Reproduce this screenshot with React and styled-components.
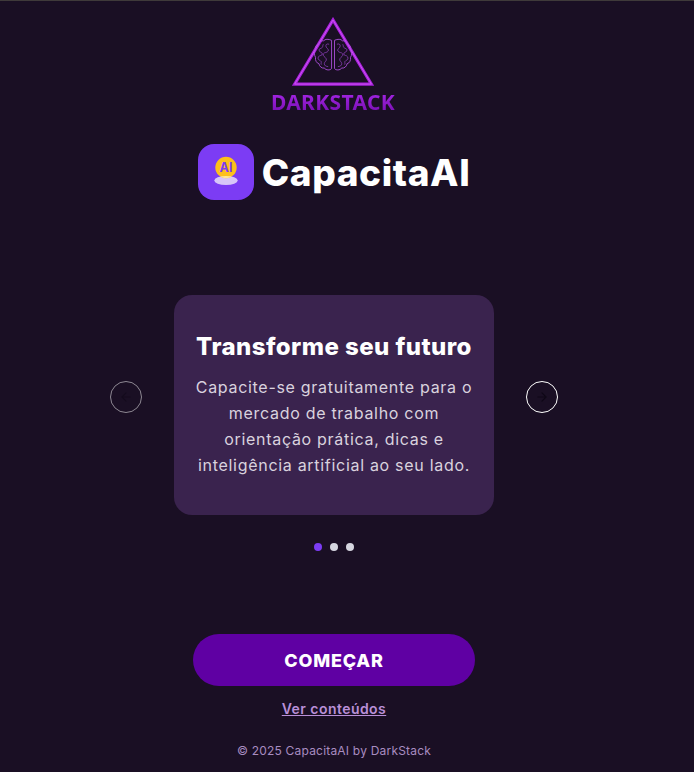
import React from "react";
import styled, { createGlobalStyle } from "styled-components";

const GlobalStyle = createGlobalStyle`
  html, body {
    margin: 0;
    padding: 0;
    background: #1a0f24;
  }
  * {
    box-sizing: border-box;
  }
`;

const Page = styled.div`
  width: 694px;
  height: 772px;
  padding-right: 26px;
  border-top: 1px solid #3f3a3a;
  display: flex;
  flex-direction: column;
  align-items: center;
  font-family: Inter, "Noto Sans", sans-serif;
  color: #fff;
`;

const LogoWrap = styled.div`
  margin-top: 16px;
  height: 95px;
  width: 130px;
  display: flex;
  flex-direction: column;
  align-items: center;
`;

const LogoName = styled.div`
  font-family: "Noto Sans", sans-serif;
  font-weight: 700;
  font-size: 21px;
  line-height: 20px;
  margin-top: 5px;
  margin-right: 2px;
  letter-spacing: 0.35px;
  background: linear-gradient(180deg, #a526e6, #7a10b4);
  -webkit-background-clip: text;
  background-clip: text;
  color: transparent;
`;

const Brand = styled.div`
  margin-top: 32px;
  display: flex;
  align-items: center;
  gap: 8px;
`;

const BrandIcon = styled.div`
  width: 56px;
  height: 56px;
  border-radius: 16px;
  background: #7c3cf4;
  display: flex;
  align-items: center;
  justify-content: center;
`;

const BrandName = styled.h1`
  margin: 0;
  font-size: 37px;
  font-weight: 800;
  letter-spacing: 0.6px;
`;

const Carousel = styled.div`
  margin-top: 95px;
  display: flex;
  align-items: center;
  gap: 32px;
`;

const ArrowButton = styled.button`
  width: 32px;
  height: 32px;
  padding: 0;
  margin-bottom: 16px;
  border-radius: 50%;
  background: transparent;
  border: 1px solid #fff;
  opacity: ${(p) => (p.disabled ? 0.5 : 1)};
  display: flex;
  align-items: center;
  justify-content: center;
  color: #0e0716;
`;

const Card = styled.div`
  width: 320px;
  height: 220px;
  border-radius: 18px;
  background: #3a234e;
  padding: 34px 16px 0;
  text-align: center;
`;

const CardTitle = styled.h2`
  margin: 0 0 9px;
  font-size: 24px;
  line-height: 36px;
  font-weight: 800;
  letter-spacing: 0.45px;
`;

const CardText = styled.p`
  margin: 0;
  font-size: 16px;
  line-height: 26px;
  letter-spacing: 0.7px;
  color: #d9d2de;
`;

const Dots = styled.div`
  margin-top: 28px;
  display: flex;
  gap: 8px;
`;

const Dot = styled.span`
  width: 8px;
  height: 8px;
  border-radius: 50%;
  background: ${(p) => (p.$active ? "#7c3cf4" : "#d6d6e0")};
`;

const StartButton = styled.button`
  margin-top: 83px;
  width: 282px;
  height: 52px;
  border: 0;
  border-radius: 26px;
  background: #5f00a3;
  color: #fff;
  font-family: inherit;
  font-size: 18px;
  font-weight: 800;
  letter-spacing: 0.8px;
`;

const ContentLink = styled.a`
  margin-top: 12px;
  font-size: 14px;
  line-height: 21px;
  font-weight: 600;
  letter-spacing: 0.45px;
  color: #b98fd8;
  text-decoration: underline;
`;

const Footer = styled.footer`
  margin-top: 23px;
  font-size: 12px;
  line-height: 18px;
  letter-spacing: 0.2px;
  color: #a88cc0;
`;

// one half of the brain, x = 0 is the middle of the picture
const lobeOutline =
  "M1.500 -19c3-1.500 7-1.500 8 0.500 3-0.500 5 1 5.500 3.500 2.500 0.500 3.500 3 3 5.500 1.500 2 1.500 6 0 8 0.500 3-1 6-3.500 6.500-0.500 3-3 5-5.500 4.500-2 2.500-6 2.500-7.500 0.500z";

const sulci = [
  "M4 -15c3-1 4 1 3 3s-3 2-2 4 4 1 5 3-2 3-3 5 2 3 2 5-2 3-4 3",
  "M10 -15c1 2 0 3 2 4s3 1 2 3-3 1-3 3 3 1 4 3 0 3-2 4 0 3-1 4",
];

const Lobe = ({ flip }) => (
  <g transform={flip ? "scale(-1 1)" : undefined} fill="none" stroke="#9a44cc" strokeWidth="0.7">
    <path d={lobeOutline} strokeWidth="0.9" stroke="#b050e0" />
    {sulci.map((d, idx) => (
      <path key={idx} d={d} />
    ))}
  </g>
);

const Logo = () => (
  <svg width="86" height="72" viewBox="0 0 86 72">
    <path d="M42 3 L2.500 69 H81.500 Z" fill="none" stroke="#a71fdc" strokeWidth="3.200" />
    <path d="M42 3 L2.500 69 H81.500 Z" fill="none" stroke="#d25cf5" strokeWidth="0.9" />
    <g transform="translate(42 43)">
      <Lobe />
      <Lobe flip />
    </g>
  </svg>
);

const BrandGlyph = () => (
  <svg width="32" height="36" viewBox="0 0 32 36">
    <defs>
      <clipPath id="coin">
        <circle cx="16" cy="13.500" r="10.700" />
      </clipPath>
    </defs>
    <ellipse cx="16" cy="26.500" rx="11.700" ry="4.500" fill="#d7c6f8" />
    <circle cx="16" cy="13.500" r="10.700" fill="#fdc01c" />
    <ellipse cx="16" cy="26.500" rx="11.700" ry="4.500" fill="#fde79a" clipPath="url(#coin)" />
    <text x="16" y="18" textAnchor="middle" fontSize="12.500" fontWeight="700" fontFamily="Inter, sans-serif" fill="#7c3cf4">AI</text>
  </svg>
);

const ArrowIcon = ({ left }) => (
  <svg width="14" height="14" viewBox="0 0 24 24" fill="none" stroke="currentColor" strokeWidth="2" strokeLinecap="round" strokeLinejoin="round">
    {left ? <path d="M19 12H5M12 19l-7-7 7-7" /> : <path d="M5 12h14M12 5l7 7-7 7" />}
  </svg>
);

const App = () => {
  return (
    <Page>
      <GlobalStyle />
      <LogoWrap>
        <Logo />
        <LogoName>DARKSTACK</LogoName>
      </LogoWrap>
      <Brand>
        <BrandIcon>
          <BrandGlyph />
        </BrandIcon>
        <BrandName>CapacitaAI</BrandName>
      </Brand>
      <Carousel>
        <ArrowButton disabled>
          <ArrowIcon left />
        </ArrowButton>
        <Card>
          <CardTitle>Transforme seu futuro</CardTitle>
          <CardText>
            Capacite-se gratuitamente para o mercado de trabalho com orientação
            prática, dicas e inteligência artificial ao seu lado.
          </CardText>
        </Card>
        <ArrowButton>
          <ArrowIcon />
        </ArrowButton>
      </Carousel>
      <Dots>
        <Dot $active />
        <Dot />
        <Dot />
      </Dots>
      <StartButton>COMEÇAR</StartButton>
      <ContentLink href="#">Ver conteúdos</ContentLink>
      <Footer>© 2025 CapacitaAI by DarkStack</Footer>
    </Page>
  );
};

export default App;
